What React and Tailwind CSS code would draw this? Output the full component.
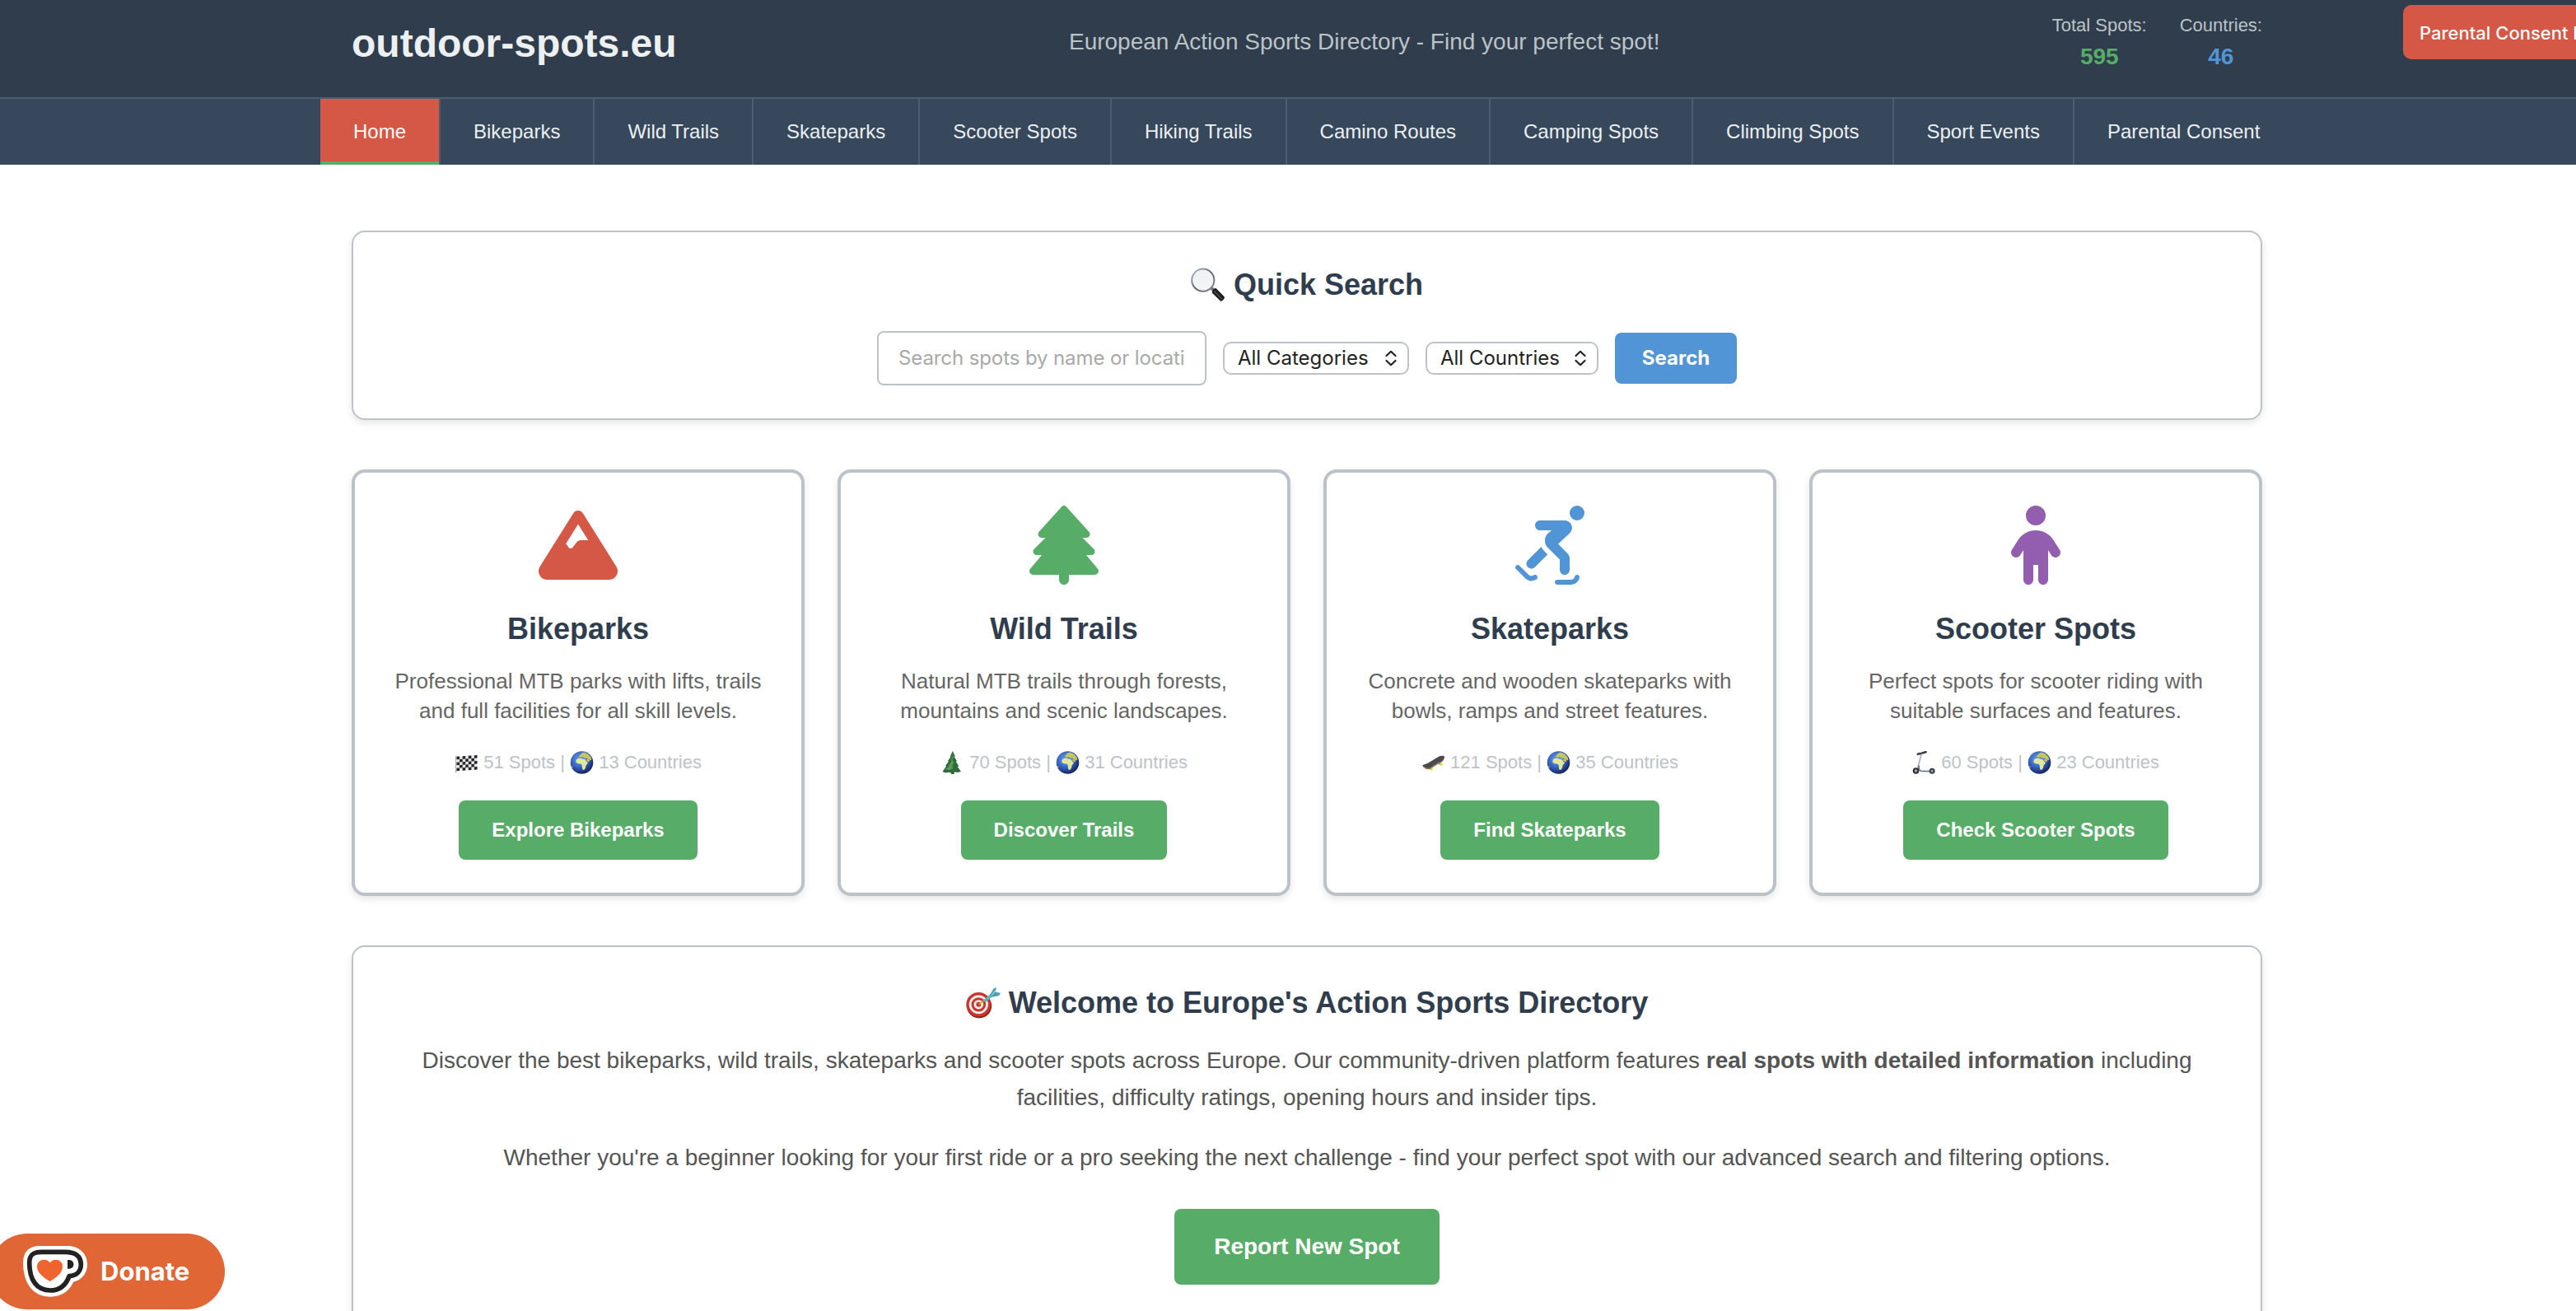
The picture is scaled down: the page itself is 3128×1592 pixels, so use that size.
import React from "react";
import { FaMountain, FaTree, FaPersonSkating, FaChild } from "react-icons/fa6";

const nav = [
  "Bikeparks",
  "Wild Trails",
  "Skateparks",
  "Scooter Spots",
  "Hiking Trails",
  "Camino Routes",
  "Camping Spots",
  "Climbing Spots",
  "Sport Events",
  "Parental Consent",
];

function Magnifier() {
  return (
    <svg className="h-[42px] w-[42px]" viewBox="0 0 42 42">
      <defs>
        <linearGradient id="lens" x1="0" y1="0" x2="0" y2="1">
          <stop offset="0" stopColor="#eef3f7" />
          <stop offset="1" stopColor="#f4f4f4" />
        </linearGradient>
        <linearGradient id="rim" x1="0" y1="0" x2="1" y2="1">
          <stop offset="0" stopColor="#b4c6dc" />
          <stop offset="0.5" stopColor="#5d646c" />
          <stop offset="1" stopColor="#8b9095" />
        </linearGradient>
      </defs>
      <path d="M23.5 26.5l3-3 3 2.5-3 3z" fill="#777" />
      <path d="M27 26.5l3.3-1.8 10.3 10.6c1.4 1.7-2.7 6.5-4.6 5.2L25.5 30.3z" fill="#1d1d1f" />
      <path d="M28.5 28.5l9.5 9.8" stroke="#55585c" strokeWidth="1.2" />
      <circle cx="14.8" cy="15.2" r="13.6" fill="url(#lens)" stroke="url(#rim)" strokeWidth="2" />
    </svg>
  );
}

function Target() {
  return (
    <svg className="h-[38px] w-[42px]" viewBox="0 0 42 38">
      <ellipse cx="16" cy="22.5" rx="15.2" ry="15" fill="#8f1d18" />
      <ellipse cx="15.3" cy="20.8" rx="15" ry="14.8" fill="#c5392e" />
      <ellipse cx="15.3" cy="20.8" rx="11.6" ry="11.4" fill="#f4eeec" />
      <ellipse cx="15.3" cy="20.8" rx="8.8" ry="8.6" fill="#c5392e" />
      <ellipse cx="15.3" cy="20.8" rx="5.8" ry="5.6" fill="#f4eeec" />
      <ellipse cx="15.3" cy="20.8" rx="3" ry="3" fill="#c5392e" />
      <path d="M15.5 20.6l8-6" stroke="#c9a43c" strokeWidth="1.6" />
      <path d="M21 15.8l10-9.3 3 3.1-10 8.4z" fill="#5bb6c4" />
      <path d="M29.5 8.500L33.800 1l3-.8-.8 5.600 5.800 1-1.500 3.200-8.300 1.800z" fill="#4aa0b0" />
      <path d="M31.5 9.500L36.500 3" stroke="#9fe0e8" strokeWidth="1.2" />
    </svg>
  );
}

function Globe() {
  return (
    <svg className="h-7 w-[29px]" viewBox="0 0 28 28">
      <defs>
        <radialGradient id="sea" cx="0.4" cy="0.35" r="0.65">
          <stop offset="0" stopColor="#6f9ee8" />
          <stop offset="0.55" stopColor="#3563c4" />
          <stop offset="1" stopColor="#17265f" />
        </radialGradient>
      </defs>
      <circle cx="14" cy="14" r="13.8" fill="url(#sea)" />
      <path d="M7 11.2c1-2 3.2-2.600 5.600-2.400 1.400 1 3.300.7 5.200 1.300 1.200 1.200 1.400 3 3.700 3.900-.6 1.900-2.500 2.800-2.700 4.500.2 1.700-1.200 4.100-3 4.600-1.200-.6-1.700-3.300-1.500-5.200-.8-1.200-.5-2.300-2.400-2.400-2.500.5-4.700-.7-5.100-2.400z" fill="#e2e89a" />
      <path d="M10.500 7.200l1-2.200 2.400-2.500 3-1 5 2.200 3.300 4.100.7 3.500-3.700-.9-2-1.400-2.900-.2-1.900-1.600-2.100.6z" fill="#c3c65f" />
      <path d="M18.500 10.500l3.800 2.900 1.600-1.800-2.600-1.600z" fill="#cfc762" />
      <path d="M1 18l2 .5-.3 2.700z" fill="#b9bd66" />
    </svg>
  );
}

function Flag() {
  const cells = [];
  for (let r = 0; r < 5; r++)
    for (let c = 0; c < 7; c++)
      if ((r + c) % 2 === 0) cells.push([c, r]);
  return (
    <svg className="h-7 w-[29px]" viewBox="0 0 28 28">
      <path d="M1.200 6v20.500" stroke="#9a9a9a" strokeWidth="1" />
      <g transform="translate(2 6.800) skewY(-4)">
        <rect width="25" height="17.500" fill="#e8e8e8" />
        {cells.map(([c, r]) => (
          <rect key={`${c}-${r}`} x={c * 3.57} y={r * 3.5} width="3.57" height="3.5" fill="#26262a" />
        ))}
      </g>
    </svg>
  );
}

function Pine() {
  return (
    <svg className="h-7 w-[29px]" viewBox="0 0 28 28">
      <rect x="12.600" y="23" width="3.400" height="5" fill="#5b3420" />
      <path d="M14.300 0l3 6.500-1 .5 3.200 5.300-1.300.5 3.500 5.500-1.500.6 4.300 6.200-4.300 1-3 -.5-3 1.500-4.700-1.300-3.500.6-4-1.500L6.500 18.500l-1-.5 4-5.500-1-.6 3.600-5.200-.8-.5z" fill="#2f6b3c" />
      <path d="M14.300 2l1 5-1.500 4 2 3-2 4 1 3-4 2-5.500-.5 4.500-4 .5-2 2.500-4-.5-2 2-4z" fill="#5d9a58" />
    </svg>
  );
}

function Skateboard() {
  return (
    <svg className="h-7 w-[29px]" viewBox="0 0 28 28">
      <circle cx="9.800" cy="21.200" r="1.500" fill="#a9c636" />
      <circle cx="12" cy="22.200" r="1.600" fill="#cfe84a" />
      <circle cx="21.600" cy="15.500" r="1.500" fill="#a9c636" />
      <circle cx="23.800" cy="16.200" r="1.600" fill="#cfe84a" />
      <path d="M1 18.700c2 2.500 6.500 3 9.500 1.500 4.500-2.500 8-6 12-7 2.300-1.200 4.500-3.500 4.900-5.200-.2 2.500-2.200 5.200-4.700 6.500-4 1-7.500 4.500-12 7-3 1.200-8 .4-9.700-2.800z" fill="#9b6b45" />
      <path d="M.5 17.600c1.500-1.500 5-1.700 8-3.700l12-7.200c2.500-1.400 6.700-1.500 7 .4.300 2-2.500 5-5 6.200-4 1-7.500 4.500-12 7-3 1.500-8 .7-10-2.700z" fill="#4b4b4f" />
    </svg>
  );
}

function Scooter() {
  return (
    <svg className="h-7 w-[29px]" viewBox="0 0 28 28" fill="none">
      <path d="M10.700 3.500L6 21.500" stroke="#a9b2ba" strokeWidth="1.700" />
      <path d="M6.200 3.800L9.300 3M11.500 2.400l4.500-1.200" stroke="#3d3d42" strokeWidth="2.600" strokeLinecap="round" />
      <path d="M7.500 17.500c-.5 5 1 7 4 7H22" stroke="#4b6f92" strokeWidth="1.600" />
      <circle cx="4" cy="24" r="2.800" fill="#aaa" stroke="#2c2c30" strokeWidth="2" />
      <circle cx="23.600" cy="24.200" r="2.500" fill="#aaa" stroke="#34404e" strokeWidth="2" />
    </svg>
  );
}

const cards = [
  {
    icon: <FaMountain className="size-24 text-[#d55745]" />,
    title: "Bikeparks",
    lines: ["Professional MTB parks with lifts, trails", "and full facilities for all skill levels."],
    emoji: <Flag />,
    spots: 51,
    countries: 13,
    action: "Explore Bikeparks",
  },
  {
    icon: <FaTree className="size-24 text-[#57ad68]" />,
    title: "Wild Trails",
    lines: ["Natural MTB trails through forests,", "mountains and scenic landscapes."],
    emoji: <Pine />,
    spots: 70,
    countries: 31,
    action: "Discover Trails",
  },
  {
    icon: <FaPersonSkating className="size-24 text-[#5195d6]" />,
    title: "Skateparks",
    lines: ["Concrete and wooden skateparks with", "bowls, ramps and street features."],
    emoji: <Skateboard />,
    spots: 121,
    countries: 35,
    action: "Find Skateparks",
  },
  {
    icon: <FaChild className="size-24 text-[#935eb0]" />,
    title: "Scooter Spots",
    lines: ["Perfect spots for scooter riding with", "suitable surfaces and features."],
    emoji: <Scooter />,
    spots: 60,
    countries: 23,
    action: "Check Scooter Spots",
  },
];

function Card({ icon, title, lines, emoji, spots, countries, action }) {
  return (
    <article className="flex h-[518px] flex-col items-center rounded-2xl border-4 border-[#bcc3c8] bg-white pt-10 shadow-[0_4px_10px_rgba(0,0,0,0.1)]">
      {icon}
      <h3 className="mt-[33px] text-[36px] leading-[42px] font-bold text-[#303d4e]">{title}</h3>
      <p className="mt-6 text-center text-[26px] leading-[36.4px] whitespace-nowrap text-[#666]">
        {lines[0]}
        <br />
        {lines[1]}
      </p>
      <div className="mt-[29px] flex h-[30px] items-center text-[22px] leading-[30px] whitespace-pre text-[#bcc3c8]">
        {emoji}
        <span> {spots} Spots | </span>
        <Globe />
        <span> {countries} Countries</span>
      </div>
      <a className="mt-[31px] flex h-[72px] items-center rounded-lg bg-[#57ad68] px-10 text-[24px] leading-[32px] font-bold text-white">
        {action}
      </a>
    </article>
  );
}

function Select({ label, className }) {
  return (
    <div className={`flex h-10 items-center justify-between rounded-[10px] border-2 border-[#bcc3c8] bg-white pr-3 pl-4 font-[Inter] text-[24px] leading-[36px] text-[#222] ${className}`}>
      <span>{label}</span>
      <svg className="h-5 w-4" viewBox="0 0 16 20" fill="none" stroke="#222" strokeWidth="2.200" strokeLinecap="round" strokeLinejoin="round">
        <path d="M2.500 7L8 1.800 13.500 7M2.500 13L8 18.200 13.500 13" />
      </svg>
    </div>
  );
}

function Cup() {
  return (
    <svg className="h-[62px] w-[78px]" viewBox="84 99 234 186">
      <path
        d="M150 121H238C276 121 295 138 295 166C295 193 277 208 252 209C239 245 217 261 183 261C135 261 107 225 107 160C107 132 120 121 150 121Z"
        fill="#fff"
        stroke="#fff"
        strokeWidth="46"
        strokeLinejoin="round"
      />
      <path
        d="M150 121H238C276 121 295 138 295 166C295 193 277 208 252 209C239 245 217 261 183 261C135 261 107 225 107 160C107 132 120 121 150 121Z"
        fill="#fff"
        stroke="#222"
        strokeWidth="17"
        strokeLinejoin="round"
      />
      <path d="M246 150C260 148 268 155 268 166C268 177 260 184 246 182Z" fill="#222" />
      <path d="M182 228C160 215 135 197 135 174C135 149 167 141 182 160C197 141 228 149 228 174C228 197 204 215 182 228Z" fill="#f0652f" />
    </svg>
  );
}

export default function App() {
  return (
    <div className="relative flex h-[1592px] w-[3128px] flex-col overflow-hidden bg-white font-['Liberation_Sans',Arial,sans-serif]">
      <header className="h-[120px] shrink-0 border-b-2 border-[#4c5d6f] bg-[#303d4c]">
        <div className="ml-[427px] flex h-[105px] w-[2320px] items-center justify-between">
          <h1 className="text-[48px] leading-[56px] font-bold text-[#ecf0f1]">outdoor-spots.eu</h1>
          <p className="pb-[3px] text-[28px] leading-[34px] text-[#bcc3c8]">European Action Sports Directory - Find your perfect spot!</p>
          <div className="flex gap-10 text-center">
            <div>
              <div className="text-[22px] leading-[31px] text-[#bcc3c8]">Total Spots:</div>
              <div className="text-[28px] leading-[45px] font-bold text-[#57ad68]">595</div>
            </div>
            <div>
              <div className="text-[22px] leading-[31px] text-[#bcc3c8]">Countries:</div>
              <div className="text-[28px] leading-[45px] font-bold text-[#5195d6]">46</div>
            </div>
          </div>
        </div>
      </header>

      <nav className="flex h-20 shrink-0 bg-[#37475c] pl-[389px] text-[24px] leading-[80px] whitespace-nowrap text-[#ecf0f1]">
        <a className="border-r-2 border-r-[#4c5d6f]">
          <span className="block h-20 border-b-4 border-[#57ad68] bg-[#d55745] px-10 text-white">Home</span>
        </a>
        {nav.map((n, i) => (
          <a key={n} className={`px-10 ${i < nav.length - 1 ? "border-r-2 border-[#4c5d6f]" : ""}`}>
            {n}
          </a>
        ))}
      </nav>

      <main className="mt-20 ml-[427px] flex w-[2320px] flex-col gap-[60px]">
        <section className="flex h-[230px] flex-col items-center rounded-2xl border-2 border-[#bcc3c8] bg-white pt-[41px] shadow-[0_4px_10px_rgba(0,0,0,0.1)]">
          <h2 className="flex h-[46px] items-center gap-[10px] text-[36px] leading-[46px] font-bold text-[#303d4e]">
            <Magnifier />
            Quick Search
          </h2>
          <div className="mt-[33px] flex items-center gap-5">
            <div className="h-[66px] w-[400px] rounded-lg border-2 border-[#bcc3c8] px-6 font-[Inter] text-[24px] leading-[62px] text-[#a9a9a9]">
              <div className="overflow-hidden tracking-[-0.1px] whitespace-nowrap">Search spots by name or locati</div>
            </div>
            <Select label="All Categories" className="w-[226px]" />
            <Select label="All Countries" className="w-[210px]" />
            <button className="h-[62px] w-[148px] rounded-lg bg-[#5195d6] font-[Inter] text-[24px] leading-[62px] font-bold text-white">Search</button>
          </div>
        </section>

        <section className="grid grid-cols-4 gap-10">
          {cards.map((c) => (
            <Card key={c.title} {...c} />
          ))}
        </section>

        <section className="flex h-[520px] flex-col items-center rounded-2xl border-2 border-[#bcc3c8] bg-white pt-[47px] shadow-[0_4px_10px_rgba(0,0,0,0.1)]">
          <h2 className="flex h-[42px] items-center gap-[10px] text-[36px] leading-[42px] font-bold text-[#303d4e]">
            <Target />
            Welcome to Europe's Action Sports Directory
          </h2>
          <p className="mt-[27px] text-center text-[28px] leading-[44.8px] whitespace-nowrap text-[#555]">
            Discover the best bikeparks, wild trails, skateparks and scooter spots across Europe. Our community-driven platform features{" "}
            <strong>real spots with detailed information</strong> including
            <br />
            facilities, difficulty ratings, opening hours and insider tips.
          </p>
          <p className="mt-7 text-[28px] leading-[44.8px] whitespace-nowrap text-[#555]">
            Whether you're a beginner looking for your first ride or a pro seeking the next challenge - find your perfect spot with our advanced search and filtering options.
          </p>
          <a className="mt-10 flex h-[92px] items-center rounded-lg bg-[#57ad68] px-12 text-[28px] leading-[36px] font-bold text-white">Report New Spot</a>
        </section>
      </main>

      <a className="absolute top-[6px] left-[2918px] h-[66px] w-[290px] rounded-[10px] bg-[#d55745] pl-5 font-[Inter] text-[22px] leading-[68px] font-medium whitespace-nowrap text-white">
        Parental Consent Form
      </a>
      <a className="absolute bottom-[2px] left-[-13px] flex h-[92px] w-[286px] items-center rounded-full bg-[#e06636] pl-[41px] font-[Inter] text-[31px] font-bold text-white">
        <Cup />
        <span className="ml-4">Donate</span>
      </a>
    </div>
  );
}
